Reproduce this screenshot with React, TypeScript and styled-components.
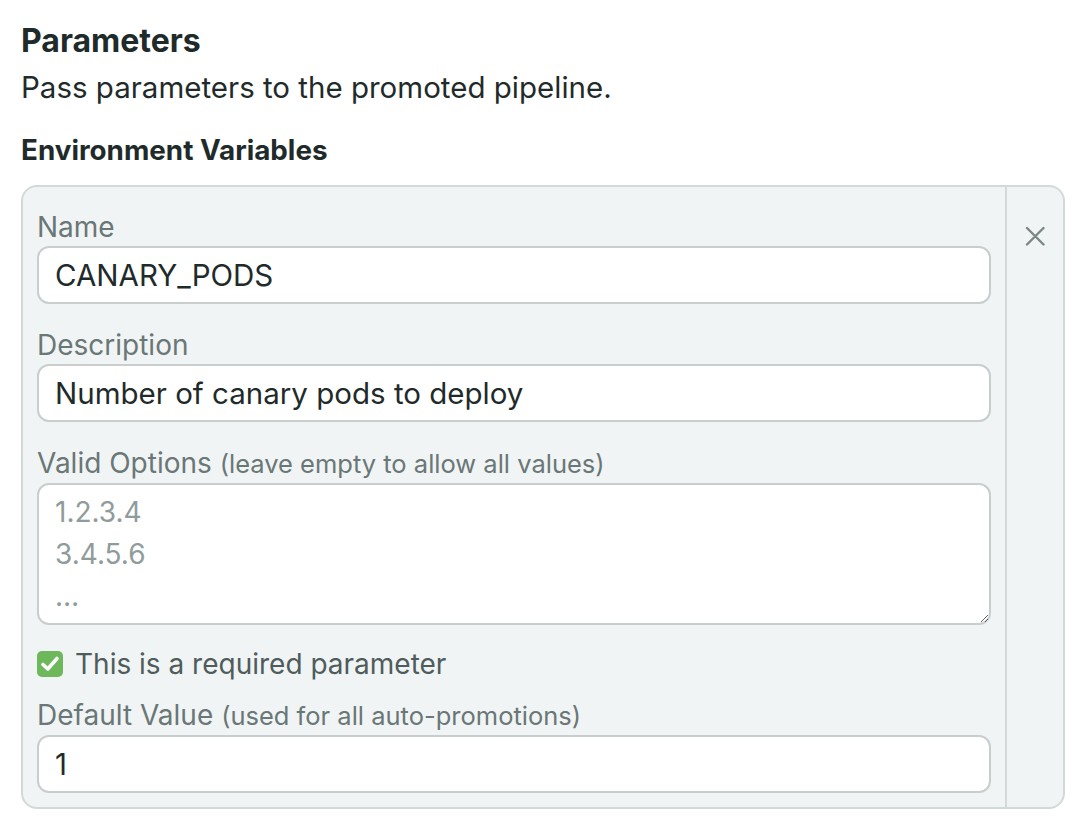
import styled, { createGlobalStyle } from 'styled-components';

const GlobalStyle = createGlobalStyle`
  html, body {
    margin: 0;
    background: #ffffff;
  }
  body {
    font-family: Inter, "Noto Sans", "Liberation Sans", sans-serif;
    color: #1f2b2b;
  }
`;

const Page = styled.div`
  padding: 22px 13px 12px 21px;
`;

const Title = styled.h2`
  margin: 0;
  font-size: 32px;
  line-height: 38px;
  font-weight: 700;
  color: #1f2b2b;
`;

const Subtitle = styled.p`
  margin: 8px 0 0;
  font-size: 29.5px;
  line-height: 38px;
  color: #1f2b2b;
`;

const SectionTitle = styled.h3`
  margin: 27px 0 0;
  font-size: 27.8px;
  line-height: 34px;
  font-weight: 700;
  color: #1f2b2b;
`;

const Card = styled.div`
  display: flex;
  margin-top: 18px;
  background: #f1f4f4;
  border: 2px solid #d3d9d9;
  border-radius: 16px;
`;

const Fields = styled.div`
  flex: 1;
  display: flex;
  flex-direction: column;
  gap: 24px;
  padding: 23px 14px 14px;
`;

const Side = styled.div`
  width: 56px;
  border-left: 2px solid #d3d9d9;
  display: flex;
  justify-content: center;
  padding-top: 38px;
`;

const CloseButton = styled.button`
  border: none;
  background: transparent;
  padding: 0;
  width: 22px;
  height: 22px;
  cursor: pointer;
  display: flex;
  align-items: center;
  justify-content: center;
`;

const Field = styled.div`
  display: flex;
  flex-direction: column;
  gap: 2px;
`;

const Label = styled.label`
  font-size: 28px;
  line-height: 34px;
  color: #6a7777;
`;

const Hint = styled.span`
  font-size: 25.5px;
`;

const Input = styled.input`
  box-sizing: border-box;
  height: 58px;
  width: 100%;
  padding: 0 16px;
  border: 2px solid #c8cdcd;
  border-radius: 12px;
  background: #ffffff;
  font-family: inherit;
  font-size: 29.5px;
  color: #1f2b2b;
  outline: none;
`;

const TextArea = styled.textarea`
  box-sizing: border-box;
  height: 142px;
  width: 100%;
  padding: 6px 16px;
  border: 2px solid #c8cdcd;
  border-radius: 12px;
  background: #ffffff;
  font-family: inherit;
  font-size: 28px;
  line-height: 42px;
  color: #1f2b2b;
  outline: none;
  resize: vertical;

  &::placeholder {
    color: #909b9b;
  }
`;

const CheckRow = styled.label`
  display: flex;
  align-items: center;
  gap: 12px;
  margin: -3px 0 -8px;
  font-size: 28px;
  line-height: 36px;
  color: #4f5c5c;
`;

const CheckBox = styled.span`
  width: 26px;
  height: 26px;
  border-radius: 5px;
  background: #6cb85a;
  display: flex;
  align-items: center;
  justify-content: center;
`;

const App = () => {
  return (
    <Page>
      <GlobalStyle />
      <Title>Parameters</Title>
      <Subtitle>Pass parameters to the promoted pipeline.</Subtitle>
      <SectionTitle>Environment Variables</SectionTitle>
      <Card>
        <Fields>
          <Field>
            <Label>Name</Label>
            <Input defaultValue="CANARY_PODS" />
          </Field>
          <Field>
            <Label>Description</Label>
            <Input defaultValue="Number of canary pods to deploy" />
          </Field>
          <Field>
            <Label>
              Valid Options <Hint>(leave empty to allow all values)</Hint>
            </Label>
            <TextArea placeholder={'1.2.3.4\n3.4.5.6\n…'} />
          </Field>
          <CheckRow>
            <CheckBox>
              <svg width="22" height="22" viewBox="0 0 22 22">
                <path
                  d="M4 11.5 L8.8 16 L18 5.5"
                  fill="none"
                  stroke="#ffffff"
                  strokeWidth="3.6"
                  strokeLinecap="round"
                  strokeLinejoin="round"
                />
              </svg>
            </CheckBox>
            This is a required parameter
          </CheckRow>
          <Field>
            <Label>
              Default Value <Hint>(used for all auto-promotions)</Hint>
            </Label>
            <Input defaultValue="1" />
          </Field>
        </Fields>
        <Side>
          <CloseButton aria-label="Remove">
            <svg width="20" height="20" viewBox="0 0 20 20">
              <path
                d="M2 2 L18.5 18.5 M18.5 2 L2 18.5"
                stroke="#7b8686"
                strokeWidth="2.4"
                strokeLinecap="round"
              />
            </svg>
          </CloseButton>
        </Side>
      </Card>
    </Page>
  );
};

export default App;
